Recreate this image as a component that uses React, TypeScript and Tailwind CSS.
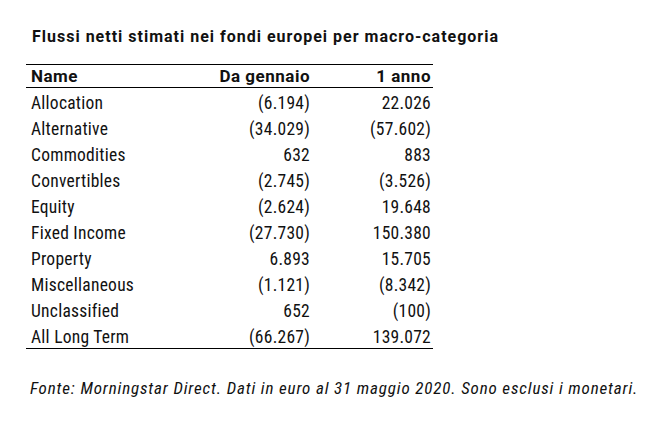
const rows: [string, string, string][] = [
  ['Allocation', '(6.194)', '22.026'],
  ['Alternative', '(34.029)', '(57.602)'],
  ['Commodities', '632', '883'],
  ['Convertibles', '(2.745)', '(3.526)'],
  ['Equity', '(2.624)', '19.648'],
  ['Fixed Income', '(27.730)', '150.380'],
  ['Property', '6.893', '15.705'],
  ['Miscellaneous', '(1.121)', '(8.342)'],
  ['Unclassified', '652', '(100)'],
  ['All Long Term', '(66.267)', '139.072'],
];

export default function App() {
  return (
    <div className="w-[658px] h-[423px] bg-white text-[#111] font-['Roboto',sans-serif]">
      <div className="pt-[27px] pl-[26px]">
        <h1 className="pl-[6px] text-[16px] leading-[20px] font-bold font-stretch-normal tracking-[1px]">
          Flussi netti stimati nei fondi europei per macro-categoria
        </h1>
        <div className="mt-[17px] w-[407px] border-t border-b border-black">
          <div className="flex items-end h-[23px] pb-[1px] border-b border-black text-[17px] leading-[20px] font-bold font-stretch-normal tracking-[0.5px]">
            <div className="flex-1 pl-[5px]">Name</div>
            <div className="w-[120px] pr-[2px] text-right">Da gennaio</div>
            <div className="w-[121px] pr-[2px] text-right">1 anno</div>
          </div>
          {rows.map(([name, a, b]) => (
            <div key={name} className="flex items-end h-[26px] pb-[1px] text-[17.5px] leading-[20px] font-stretch-condensed tracking-[0.25px]">
              <div className="flex-1 pl-[5px]">{name}</div>
              <div className="w-[120px] pr-[2px] text-right">{a}</div>
              <div className="w-[121px] pr-[2px] text-right">{b}</div>
            </div>
          ))}
        </div>
        <p className="mt-[29px] pl-[4px] text-[17px] leading-[20px] italic font-stretch-semi-condensed tracking-[0.85px]">
          Fonte: Morningstar Direct. Dati in euro al 31 maggio 2020. Sono esclusi i monetari.
        </p>
      </div>
    </div>
  );
}
